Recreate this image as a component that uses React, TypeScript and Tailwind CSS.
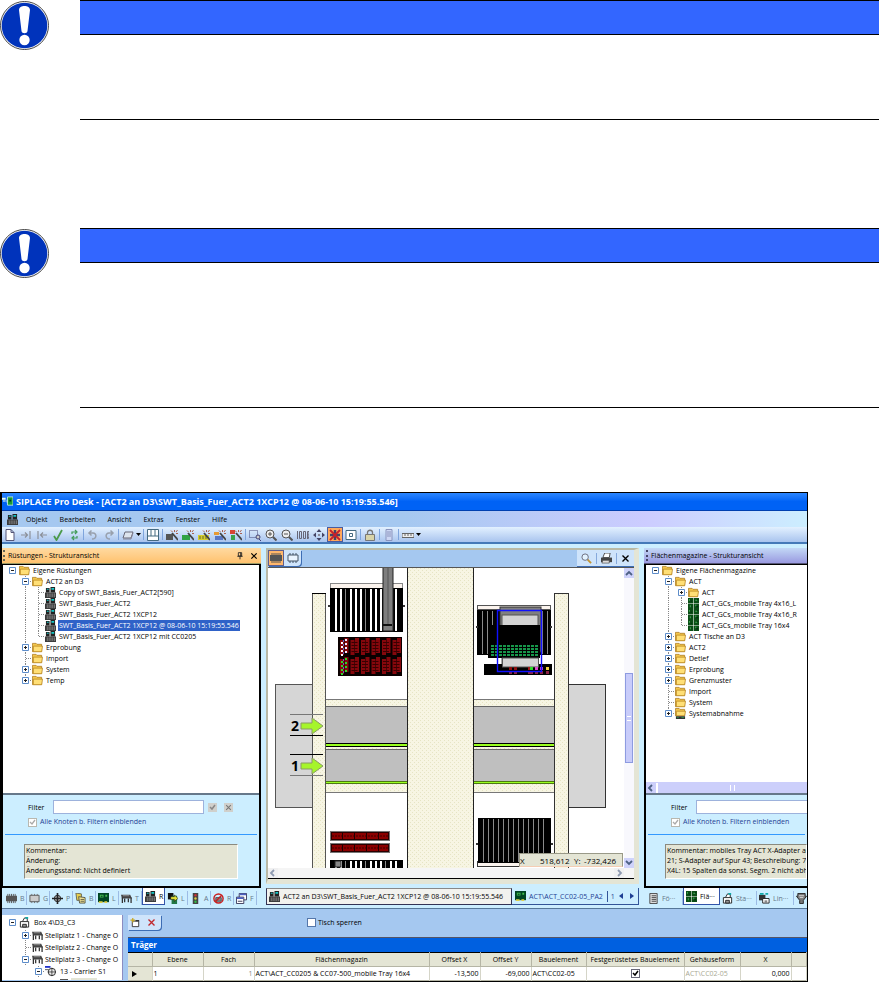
import { useState } from "react";
import type { ReactNode } from "react";
import clsx from "clsx";

type IconName =
  | "setup" | "folder" | "folderMark" | "board" | "chip" | "chipLight" | "target" | "notes" | "pcb" | "table"
  | "stack" | "traffic" | "forbidden" | "windows" | "page" | "indent" | "outdent" | "check" | "refresh" | "undo" | "redo"
  | "tray" | "grid" | "wizard" | "wizardGreen" | "wizardYellow" | "wizardMulti" | "wizardRed" | "select" | "zoomIn"
  | "zoomOut" | "hundred" | "move" | "star" | "fit" | "lock" | "db" | "ruler" | "search" | "print" | "station" | "line"
  | "feeder" | "list" | "funnel" | "newItem" | "cross" | "pin" | "app";

const wand = (
  <g>
    <path d="M6 4l6 7" stroke="#444" strokeWidth="1.8" />
    <path d="M8.500 1v2M10 4.500h2M11.500 1l-1.500 2M5 1.500L6.500 3" stroke="#a5523c" strokeWidth=".9" />
  </g>
);

const ICONS: Record<IconName, ReactNode> = {
  setup: (
    <g>
      <path d="M0 6h12v6H0z" fill="#3a3a3a" />
      <path d="M1 1h4v5H1zM6 0h5v6H6z" fill="#222" />
      <path d="M2 2h2v1H2zM7 1h3v2H7z" fill="#14c8c8" />
      <path d="M2.500 7v4M4.500 7v4M6.500 7v4M8.500 7v4M10.500 7v4" stroke="#999" strokeWidth=".8" />
    </g>
  ),
  folder: (
    <g>
      <path d="M.5 3.500v-2h4l1 1h5v8h-10z" fill="#f3c64c" stroke="#a87416" strokeWidth=".8" />
      <path d="M1.500 4.500h10l-1 6h-9z" fill="#ffdf76" stroke="#b78320" strokeWidth=".8" />
    </g>
  ),
  folderMark: (
    <g>
      <path d="M.5 2.500v-2h4l1 1h5v7h-10z" fill="#f3c64c" stroke="#a87416" strokeWidth=".8" />
      <path d="M1.500 3.500h10l-1 5h-9z" fill="#ffdf76" stroke="#b78320" strokeWidth=".8" />
      <path d="M1 9h10v3H1z" fill="#333" />
      <path d="M2 10h2v1H2zM7 10h3v1H7z" fill="#29a04a" />
    </g>
  ),
  board: (
    <g>
      <path d="M0 0h5.700v5.700H0zM6.300 0H12v5.700H6.300zM0 6.300h5.700V12H0zM6.300 6.300H12V12H6.300z" fill="#0a4d15" />
      <path d="M1 1h1v2H1zM8 2h2v1H8zM2 8h1v2H2zM8 7h1v2H8z" fill="#45b05a" />
      <path d="M3 3h1v1H3zM10 1h1v1h-1zM9 9h2v1H9z" fill="#021" />
    </g>
  ),
  chip: (
    <g>
      <path d="M2 1v10M4 1v10M6 1v10M8 1v10M10 1v10" stroke="#555" />
      <path d="M0 3h12v6H0z" fill="#555" />
    </g>
  ),
  chipLight: (
    <g>
      <path d="M3 1v10M6 1v10M9 1v10" stroke="#777" />
      <path d="M1 2.500h10v7H1z" fill="#ccc" stroke="#555" />
    </g>
  ),
  target: (
    <g fill="none" stroke="#222">
      <circle cx="6" cy="6" r="3.500" fill="#bbb" />
      <path d="M6 0v12M0 6h12" strokeWidth="1.800" />
    </g>
  ),
  notes: (
    <g>
      <path d="M1 0l6 1v7H2z" fill="#e8cf4c" stroke="#665" />
      <path d="M4 4l7 1v6H5z" fill="#f6e796" stroke="#554" />
      <path d="M6 7h4M6 9h4" stroke="#554" />
    </g>
  ),
  pcb: (
    <g>
      <path d="M0 0h12v10H0z" fill="#042" />
      <path d="M2 2h4v3H2zM8 2h2v2H8z" fill="#3fbf4b" />
      <path d="M1 9h4v2H1zM7 9h3v2H7z" fill="#e0d046" />
      <path d="M3 3h2v1H3z" fill="#012" />
    </g>
  ),
  table: (
    <g>
      <path d="M0 2h10l2 4H1z" fill="#444" />
      <path d="M1.500 5v6M4 6v4M11 5v6M8 6v4" stroke="#333" strokeWidth="1.400" />
      <path d="M2 3h7" stroke="#999" />
    </g>
  ),
  stack: (
    <g>
      <path d="M1 0h6v7H1z" fill="#111" />
      <path d="M5 3h6v9H5z" fill="#274" />
      <path d="M4 4h4V2l4 4-4 3V7H4z" fill="#e2e23a" stroke="#111" strokeWidth=".6" />
    </g>
  ),
  traffic: (
    <g>
      <path d="M3 0h6v12H3z" fill="#444" />
      <circle cx="6" cy="2.500" r="1.300" fill="#c33" />
      <circle cx="6" cy="6" r="1.300" fill="#dc4" />
      <circle cx="6" cy="9.500" r="1.300" fill="#3b4" />
    </g>
  ),
  forbidden: (
    <g fill="none" stroke="#c91f1f" strokeWidth="1.600">
      <path d="M3 5h6v4H3z" fill="#888" stroke="#333" strokeWidth=".8" />
      <circle cx="6" cy="6" r="5" />
      <path d="M9.500 2.500l-7 7" />
    </g>
  ),
  windows: (
    <g stroke="#335" fill="#fff">
      <path d="M3.500.5h8v7h-8z" />
      <path d="M.5 4.500h8v7h-8z" />
      <path d="M1 5.500h7M4 1.500h7" stroke="#4a5fc0" strokeWidth="2" />
      <path d="M2 9h5" />
    </g>
  ),
  page: <path d="M2 .5h5l3 3v8H2zM7 .5v3h3" fill="#fff" stroke="#557" />,
  indent: <path d="M1 6h6M5 3.500L7.500 6 5 8.500M10 2v8" fill="none" stroke="#8c9099" strokeWidth="1.200" />,
  outdent: <path d="M11 6H5M7 3.500L4.500 6 7 8.500M2 2v8" fill="none" stroke="#8c9099" strokeWidth="1.200" />,
  check: <path d="M2 7l2.500 4L10 1" fill="none" stroke="#4b9a4b" strokeWidth="1.800" />,
  refresh: <path d="M4 5V3h4M7 1l2 2-2 2M9 7v2H5M6 7L4 9l2 2" fill="none" stroke="#3f9a55" strokeWidth="1.200" />,
  undo: <path d="M5 10c5 0 5-6 1-6H2M4.500 1.500L2 4l2.500 2.500" fill="none" stroke="#98a0ad" strokeWidth="1.500" />,
  redo: <path d="M7 10c-5 0-5-6-1-6h4M7.500 1.500L10 4 7.500 6.500" fill="none" stroke="#98a0ad" strokeWidth="1.500" />,
  tray: (
    <g>
      <path d="M3 3h8l-2 6H1z" fill="#dde4ee" stroke="#667" />
      <path d="M1 10h8l2-6" fill="none" stroke="#889" />
    </g>
  ),
  grid: <path d="M.5.5h11v11H.5zM.5 7h11M4 .5V7M8 .5V7" fill="#fff" stroke="#446a80" />,
  wizard: <g><path d="M0 5h7v6H0z" fill="#555" />{wand}</g>,
  wizardGreen: <g><path d="M0 6h8v5H0z" fill="#31a345" />{wand}</g>,
  wizardYellow: <g><path d="M0 6h11v5H0z" fill="#d4cd2e" /><path d="M2 7v3M5 7v3M8 7v3" stroke="#663" />{wand}</g>,
  wizardMulti: <g><path d="M0 3h5v3H0z" fill="#e79a34" /><path d="M1 7h8v4H1z" fill="#5977c4" />{wand}</g>,
  wizardRed: <g><path d="M0 1h5v4H0z" fill="#d64534" /><path d="M1 6h4v5H1z" fill="#39a34b" />{wand}</g>,
  select: (
    <g fill="none" stroke="#447">
      <path d="M.5 1.500h8v7h-8z" strokeDasharray="1 1" />
      <circle cx="9" cy="8" r="2" fill="#ccc" />
      <path d="M10 10l2 2" />
    </g>
  ),
  zoomIn: (
    <g fill="none" stroke="#555">
      <circle cx="5" cy="5" r="4" fill="#eee" />
      <path d="M3 5h4M5 3v4" />
      <path d="M8 8l3.500 3.500" strokeWidth="2" />
    </g>
  ),
  zoomOut: (
    <g fill="none" stroke="#555">
      <circle cx="5" cy="5" r="4" fill="#eee" />
      <path d="M3 5h4" />
      <path d="M8 8l3.500 3.500" strokeWidth="2" />
    </g>
  ),
  hundred: <path d="M.5 2v8M2.500 2.500h2v7h-2zM6.500 2.500h2v7h-2zM10.500 10V2.500H12V6h-1.500L12 10" fill="none" stroke="#667" />,
  move: (
    <g fill="#446">
      <path d="M6 0l2.500 3h-5zM6 12l2.500-3h-5zM0 6l3-2.500v5zM12 6L9 3.500v5z" />
      <path d="M5 5h2v2H5z" fill="#889" />
    </g>
  ),
  star: (
    <g>
      <path d="M6 1v10M1 6h10" stroke="#446" strokeWidth="2.500" />
      <path d="M1 1l10 10M11 1L1 11" stroke="#c9202a" strokeWidth="1.800" />
    </g>
  ),
  fit: <path d="M1 1.500h10v9H1zM4.500 4.500h3v3h-3z" fill="#fff" stroke="#446a80" />,
  lock: (
    <g>
      <path d="M3.500 6V3.500c0-3 5-3 5 0V6" fill="none" stroke="#777" strokeWidth="1.300" />
      <path d="M1.500 5.500h9v6h-9z" fill="#d8d3a8" stroke="#777" />
    </g>
  ),
  db: <path d="M3 .5h6v11H3zM4 3h4M4 5h4M4 7h4" fill="#ccd6f4" stroke="#8a94bd" />,
  ruler: <path d="M0 4.500h12v4H0zM3 5v2M6 5v2M9 5v2" fill="#eee" stroke="#666" />,
  search: (
    <g fill="none">
      <path d="M7 7l4 4" stroke="#c29434" strokeWidth="2" />
      <circle cx="4.500" cy="4.500" r="3.500" fill="#e2f2ff" stroke="#667" />
    </g>
  ),
  print: (
    <g>
      <path d="M4 0h6L9 5H2z" fill="#fff" stroke="#444" />
      <path d="M0 5h12v5H0z" fill="#444" />
      <path d="M2 8h7v3H1z" fill="#ddd" stroke="#444" strokeWidth=".7" />
    </g>
  ),
  station: (
    <g fill="#fff" stroke="#222">
      <path d="M4 4.500L6 1h3v4" />
      <path d="M1.500 5h9v6h-9z" />
      <path d="M4 8h4v3H4z" fill="#999" />
      <path d="M7 1h3" stroke="#1aa" strokeWidth="2" />
    </g>
  ),
  line: (
    <g>
      <path d="M0 2h7v6H0z" fill="#333" />
      <path d="M1 1h4M7 1h3" stroke="#1aa" strokeWidth="2" />
      <path d="M4 6h7v5H4z" fill="#fff" stroke="#222" />
      <path d="M6 8h3v3H6z" fill="#888" />
    </g>
  ),
  feeder: (
    <g>
      <path d="M0 1h6" stroke="#2233cc" strokeWidth="2" />
      <circle cx="7.500" cy="6.500" r="4" fill="#eee" stroke="#222" />
      <path d="M3 6.500h9M7.500 2v9M0 4h4" stroke="#222" strokeWidth=".8" />
    </g>
  ),
  list: <path d="M2 .5h8v11H2zM4 3h5M4 5h5M4 7h5M4 9h5" fill="#ddd" stroke="#444" />,
  funnel: (
    <g>
      <path d="M2 .5h8v3h1.500L8 8v3.500H4V8L.5 3.500H2z" fill="#777" stroke="#222" />
      <path d="M3 3h6M4 5h4" stroke="#ddd" />
    </g>
  ),
  newItem: (
    <g>
      <path d="M2.500 4.500h7v6h-7z" fill="#fff" stroke="#333" />
      <path d="M6 4h4" stroke="#333" strokeWidth="1.500" />
      <path d="M3 1v5M.5 3.500h5" stroke="#c9a61c" strokeWidth="1.300" />
    </g>
  ),
  cross: <path d="M2 2l8 8M10 2l-8 8" fill="none" stroke="currentColor" strokeWidth="1.800" />,
  pin: <path d="M3.500 1h5v5h-5zM7 1v5M2 6.500h8M6 7v4" fill="none" stroke="#222" strokeWidth="1.300" />,
  app: (
    <g>
      <path d="M0 2h4v2H0zM5 4h1v3H5zM1 5h3v1H1z" fill="#e8fff0" />
      <path d="M6 1h6v9H6z" fill="#1a9b35" stroke="#dfe" strokeWidth=".8" />
      <path d="M8 4h2v2H8z" fill="#032" />
    </g>
  ),
};

function Icon({ name, className = "size-[11px]" }: { name: IconName; className?: string }) {
  return (
    <svg viewBox="0 0 12 12" className={clsx("shrink-0", className)} aria-hidden="true">
      {ICONS[name]}
    </svg>
  );
}

/* ---------- notes ---------- */

function Note({ className }: { className: string }) {
  return (
    <section className={clsx("flex gap-[31px] border-black", className)}>
      <svg viewBox="0 0 49 49" className="mt-px size-[49px] shrink-0" role="img" aria-label="Hinweis">
        <circle cx="24.500" cy="24.500" r="24" fill="#fff" stroke="#444" />
        <circle cx="24.500" cy="24.500" r="22.800" fill="#0033bb" />
        <path d="M19 9c0-5.500 11-5.500 11 0l-2.500 21c-.3 3-5.700 3-6 0z" fill="#fff" />
        <circle cx="24.500" cy="39" r="5.200" fill="#fff" />
      </svg>
      <div className="flex-1 border-b border-black">
        <div className="h-[35px] border-y border-black bg-[#3366ff]" />
      </div>
    </section>
  );
}

/* ---------- trees ---------- */

type TreeNode = {
  label: string;
  depth: 0 | 1 | 2;
  icon: IconName;
  toggle?: "+" | "-";
  last?: boolean;
  selected?: boolean;
};

const SETUPS: TreeNode[] = [
  { label: "Eigene Rüstungen", depth: 0, icon: "folder", toggle: "-" },
  { label: "ACT2 an D3", depth: 1, icon: "folder", toggle: "-" },
  { label: "Copy of SWT_Basis_Fuer_ACT2[590]", depth: 2, icon: "setup" },
  { label: "SWT_Basis_Fuer_ACT2", depth: 2, icon: "setup" },
  { label: "SWT_Basis_Fuer_ACT2 1XCP12", depth: 2, icon: "setup" },
  { label: "SWT_Basis_Fuer_ACT2 1XCP12 @ 08-06-10 15:19:55.546", depth: 2, icon: "setup", selected: true },
  { label: "SWT_Basis_Fuer_ACT2 1XCP12 mit CC0205", depth: 2, icon: "setup", last: true },
  { label: "Erprobung", depth: 1, icon: "folder", toggle: "+" },
  { label: "Import", depth: 1, icon: "folder" },
  { label: "System", depth: 1, icon: "folder", toggle: "+" },
  { label: "Temp", depth: 1, icon: "folder", toggle: "+", last: true },
];

const TRAYS: TreeNode[] = [
  { label: "Eigene Flächenmagazine", depth: 0, icon: "folder", toggle: "-" },
  { label: "ACT", depth: 1, icon: "folder", toggle: "-" },
  { label: "ACT", depth: 2, icon: "folder", toggle: "+" },
  { label: "ACT_GCs_mobile Tray 4x16_L", depth: 2, icon: "board" },
  { label: "ACT_GCs_mobile Tray 4x16_R", depth: 2, icon: "board" },
  { label: "ACT_GCs_mobile Tray 16x4", depth: 2, icon: "board", last: true },
  { label: "ACT Tische an D3", depth: 1, icon: "folder", toggle: "+" },
  { label: "ACT2", depth: 1, icon: "folder", toggle: "+" },
  { label: "Detlef", depth: 1, icon: "folder", toggle: "+" },
  { label: "Erprobung", depth: 1, icon: "folder", toggle: "+" },
  { label: "Grenzmuster", depth: 1, icon: "folder", toggle: "+" },
  { label: "Import", depth: 1, icon: "folder" },
  { label: "System", depth: 1, icon: "folder" },
  { label: "Systemabnahme", depth: 1, icon: "folderMark", toggle: "+", last: true },
];

function Branch({ node }: { node: TreeNode }) {
  const art = (
    <svg viewBox="0 0 10 11" className="h-[11px] w-[10px] shrink-0">
      {node.depth > 0 && (
        <path d={node.last ? "M3.500 0v6M4 5.500h6" : "M3.500 0v11M4 5.500h6"} stroke="#888" strokeDasharray="1 1" fill="none" />
      )}
      {node.toggle && (
        <g stroke="#5d8cc9" fill="#fff">
          <path d="M.5 2.500h6v6h-6z" />
          <path d={node.toggle === "+" ? "M2 5.500h3M3.500 4v3" : "M2 5.500h3"} stroke="#222" />
        </g>
      )}
    </svg>
  );
  if (!node.toggle) return art;
  return (
    <button type="button" aria-label={`${node.label} umschalten`} className="block shrink-0">
      {art}
    </button>
  );
}

function Tree({ nodes }: { nodes: TreeNode[] }) {
  return (
    <ul className="pl-[6px]">
      {nodes.map((n, i) => (
        <li key={i} className="flex h-[11px] items-center whitespace-nowrap">
          {n.depth > 0 && <span className="w-[13px] shrink-0" />}
          {n.depth > 1 && (
            <svg viewBox="0 0 13 11" className="h-[11px] w-[13px] shrink-0">
              <path d="M3.500 0v11" stroke="#888" strokeDasharray="1 1" />
            </svg>
          )}
          <Branch node={n} />
          <Icon name={n.icon} />
          <span className={clsx("ml-[2px] px-px leading-[11px]", n.selected && "bg-[#2f62c8] text-white")}>{n.label}</span>
        </li>
      ))}
    </ul>
  );
}

/* ---------- docked panels ---------- */

function FilterBox({ id, comment, wide }: { id: string; comment: string[]; wide?: boolean }) {
  const [filter, setFilter] = useState("");
  return (
    <div className="h-[93px] shrink-0 overflow-hidden border-t-2 border-[#66788a] bg-[#cceeff] pt-[5px]">
      <div className="flex items-center pl-[25px]">
        <label htmlFor={id} className="w-[25px] shrink-0">
          Filter
        </label>
        <input
          id={id}
          value={filter}
          onChange={(e) => setFilter(e.target.value)}
          className={clsx("h-[14px] shrink-0 border border-[#9db2dc] bg-white px-1", wide ? "w-[180px]" : "w-[151px]")}
        />
        <button type="button" aria-label="Filter anwenden" className="ml-1 grid size-[9px] shrink-0 place-items-center bg-[#d0d0cc] text-[#777]">
          <svg viewBox="0 0 7 7" className="size-[7px]">
            <path d="M1 3l2 2 3-4" fill="none" stroke="#888" strokeWidth="1.500" />
          </svg>
        </button>
        <button type="button" aria-label="Filter löschen" className="ml-[7px] grid size-[9px] shrink-0 place-items-center bg-[#d0d0cc] text-[#777]">
          <Icon name="cross" className="size-[7px]" />
        </button>
      </div>
      <label className="mt-[3px] flex items-center gap-[3px] whitespace-nowrap pl-[25px] leading-[10px] text-[#1f3f94]">
        <span className="grid size-[9px] place-items-center border border-[#b8b8b0] bg-white">
          <input type="checkbox" defaultChecked className="peer col-start-1 row-start-1 size-[7px] appearance-none" />
          <svg viewBox="0 0 7 7" className="pointer-events-none col-start-1 row-start-1 hidden size-[7px] peer-checked:block">
            <path d="M1 3l2 2 3-4" fill="none" stroke="#aaa" strokeWidth="1.300" />
          </svg>
        </span>
        Alle Knoten b. Filtern einblenden
      </label>
      <div className="mx-[2px] mt-[7px] h-px bg-[#3399ff]" />
      <div
        className={clsx(
          "mt-[9px] h-[35px] overflow-hidden whitespace-nowrap border border-[#8a8a80] border-b-white border-r-white bg-[#e4e5d5] px-px pt-px leading-[10px]",
          wide ? "ml-[19px]" : "mx-[21px]",
        )}
      >
        {comment.map((c) => (
          <p key={c}>{c}</p>
        ))}
      </div>
    </div>
  );
}

type StripTab = { icon: IconName; label: string; active?: boolean };

const LEFT_TABS: StripTab[] = [
  { icon: "chip", label: "B" },
  { icon: "chipLight", label: "G" },
  { icon: "target", label: "P" },
  { icon: "notes", label: "B" },
  { icon: "pcb", label: "L" },
  { icon: "table", label: "T" },
  { icon: "setup", label: "R", active: true },
  { icon: "stack", label: "L" },
  { icon: "traffic", label: "A" },
  { icon: "forbidden", label: "R" },
  { icon: "windows", label: "F" },
];

const RIGHT_TABS: StripTab[] = [
  { icon: "list", label: "Fö···" },
  { icon: "board", label: "Flä···", active: true },
  { icon: "station", label: "Sta···" },
  { icon: "line", label: "Lin···" },
  { icon: "funnel", label: "" },
];

function TabStrip({ tabs, width }: { tabs: StripTab[]; width: string }) {
  return (
    <div className="flex h-[20px] shrink-0 overflow-hidden pl-[2px]">
      {tabs.map((t, i) => (
        <button
          key={i}
          type="button"
          className={clsx(
            "flex shrink-0 items-center gap-[3px] whitespace-nowrap border-r pl-[2px]",
            width,
            t.active ? "mb-[3px] border-b border-l border-[#3355aa] bg-white text-black" : "my-[3px] border-[#9cbbe4] text-[#667788]",
          )}
        >
          <Icon name={t.icon} />
          {t.label}
        </button>
      ))}
    </div>
  );
}

/* ---------- machine drawing, in canvas units of the view ---------- */

function Comb({ x, y, w, h, light }: { x: number; y: number; w: number; h: number; light?: boolean }) {
  const slots = Array.from({ length: Math.floor((w - 4) / 5) }, (_, i) => i);
  return (
    <g>
      <rect x={x} y={y} width={w} height={h} fill="#000" />
      {slots.map((i) => {
        const white = light && i % 4 !== 2;
        return <rect key={i} x={x + 5 + i * 5} y={y + 1} width={white ? 2 : 1} height={h - 2} fill={white ? "#fff" : "#8a8a8a"} />;
      })}
    </g>
  );
}

function MachineDrawing() {
  const cols = [0, 1, 2, 3, 4, 5];
  return (
    <svg viewBox="0 0 357 300" preserveAspectRatio="xMinYMin slice" className="block h-[300px] min-w-0 flex-1 bg-white" role="img" aria-label="Maschinenansicht">
      <defs>
        <pattern id="weave" width="4" height="4" patternUnits="userSpaceOnUse">
          <rect width="4" height="4" fill="#f7f5e3" />
          <path d="M0 0h1v1H0zM2 2h1v1H2z" fill="#e6e4c4" />
        </pattern>
      </defs>

      {/* side tables */}
      <rect x="7.500" y="116.500" width="37" height="123" fill="#d6d6d6" stroke="#555" />
      <rect x="300.500" y="116.500" width="37" height="123" fill="#d6d6d6" stroke="#333" />

      {/* cross band with the two conveyors */}
      <g stroke="#777">
        <rect x="57.500" y="131.500" width="82" height="93" fill="url(#weave)" />
        <rect x="205.500" y="131.500" width="81" height="93" fill="url(#weave)" />
      </g>
      {[58, 206].map((x) => (
        <g key={x}>
          <rect x={x} y="138" width="81" height="37" fill="#bfbfbf" />
          <path d={`M${x} 138.500h81M${x} 181.500h81`} stroke="#666" />
          <rect x={x} y="182" width="81" height="31" fill="#bfbfbf" />
          <rect x={x} y="175" width="81" height="4" fill="#000" />
          <rect x={x} y="176" width="81" height="2" fill="#9aff1f" />
          <rect x={x} y="213" width="81" height="3" fill="#4c7a12" />
          <rect x={x} y="214" width="81" height="1" fill="#9aff1f" />
        </g>
      ))}

      {/* posts and middle column */}
      <rect x="139.500" y="-1" width="66" height="303" fill="url(#weave)" stroke="#222" />
      <rect x="44.500" y="25.500" width="13" height="276" fill="url(#weave)" stroke="#555" />
      <path d="M44 25.500h14" stroke="#000" />
      <rect x="286.500" y="25.500" width="14" height="276" fill="url(#weave)" stroke="#333" />

      {/* conveyor numbers */}
      <path d="M22 146.500h33M22 207.500h33" stroke="#777" />
      <path d="M22 167.500h33M22 186.500h33" stroke="#000" />
      {[158, 198].map((y) => (
        <path key={y} d={`M33 ${y - 3}h11v-5l11 8-11 8v-5H33z`} fill="#a6f52b" stroke="#8a9a66" />
      ))}
      <g className="text-[14px] font-bold" fill="#000">
        <text x="23" y="163">2</text>
        <text x="23" y="203">1</text>
      </g>

      {/* upper left magazine */}
      <rect x="62.500" y="15.500" width="72" height="5" fill="#fbf4ee" stroke="#888" />
      <Comb x={62} y={20} w={73} h={44} light />
      <path d="M60 38h2M135 38h2" stroke="#333" strokeWidth="2" />
      <rect x="115" y="-1" width="10" height="64" fill="#7e7e7e" stroke="#222" />
      <path d="M120 0v58" stroke="#555" />
      <rect x="115" y="56" width="9" height="2" fill="#111" />
      <rect x="70" y="69" width="64" height="39" fill="#0a0000" />
      {[0, 1].map((r) =>
        cols.map((c) => (
          <g key={`${r}-${c}`} fill="#86070c">
            <rect x={72 + c * 10.500} y={72 + r * 19} width="4" height="15" />
            <rect x={76.500 + c * 10.500} y={70 + r * 19} width="4" height="15" />
          </g>
        )),
      )}
      {[0, 1].map((r) =>
        [0, 1, 2, 3].map((k) => (
          <g key={`${r}-${k}`}>
            <rect x="73" y={74 + r * 19 + k * 4} width="2" height="2" fill={r ? "#2bd82b" : "#fff"} />
            <rect x="77" y={71 + r * 19 + k * 4} width="2" height="2" fill={r ? "#2bd82b" : "#f0e6ff"} />
            <rect x="75" y={72 + r * 19 + k * 4} width="1" height="2" fill="#5a6ad0" />
            {cols.slice(1).map((c) => (
              <rect key={c} x={73 + c * 10.500} y={74 + r * 19 + k * 3} width="6" height="1" fill="#3a0000" />
            ))}
          </g>
        )),
      )}

      {/* lower left magazines */}
      {[263, 275].map((y) => (
        <g key={y}>
          <rect x="62.500" y={y + 0.500} width="59" height="9" fill="#2a0000" stroke="#777" />
          <rect x="64" y={y + 2} width="56" height="6" fill="#8b0000" />
          <path d={`M64 ${y + 5}h56`} stroke="#3c0000" strokeDasharray="2 1" />
          <path d={`M74.500 ${y + 1}v8M86.500 ${y + 1}v8M98.500 ${y + 1}v8M110.500 ${y + 1}v8`} stroke="#200" />
        </g>
      ))}
      <Comb x={62} y={292} w={73} h={20} light />
      <rect x="67" y="293" width="6" height="6" fill="#888" stroke="#222" />

      {/* upper right magazine */}
      <rect x="209.500" y="37.500" width="73" height="4" fill="#fbf4ee" stroke="#555" />
      <Comb x={209} y={42} w={74} h={45} />
      <path d="M208 59h2M282 59h2" stroke="#333" strokeWidth="2" />
      <rect x="232" y="39" width="41" height="45" fill="#808080" stroke="#333" />
      <rect x="234" y="47" width="36" height="53" fill="#d3d3d3" stroke="#555" />
      <rect x="220" y="57" width="52" height="33" fill="#000" />
      {[0, 1, 2, 3].map((r) =>
        Array.from({ length: 12 }, (_, c) => (
          <rect key={`${r}-${c}`} x={223 + c * 4} y={77 + r * 3} width="3" height="2" fill="#17964a" />
        )),
      )}
      <rect x="216" y="96" width="68" height="11" fill="#000" />
      <rect x="234.500" y="90" width="36" height="9" fill="#d3d3d3" stroke="#555" />
      {[[241, "#8b1010"], [246, "#8b1010"], [260, "#a01818"], [262, "#2bd82b"], [267, "#e04ad0"], [272, "#d233d2"], [278, "#f0d040"]].map(([x, c]) => (
        <g key={x}>
          <rect x={x} y="99" width="3" height="3" fill={String(c)} />
          <rect x={x} y="103" width="3" height="3" fill="#8b2044" />
        </g>
      ))}
      <path d="M229.500 42.500h44v61h-44z" fill="none" stroke="#1010ff" strokeWidth="1.400" />

      {/* lower right magazine */}
      <rect x="209.500" y="293.500" width="73" height="5" fill="#fbf4ee" stroke="#333" />
      <Comb x={210} y={250} w={73} h={45} />
      <path d="M208 276h2M283 276h2" stroke="#333" strokeWidth="2" />
    </svg>
  );
}

function Chevron({ d }: { d: string }) {
  return (
    <svg viewBox="0 0 10 10" className="size-[10px]">
      <path d={d} fill="none" stroke="#4d6185" strokeWidth="1.800" />
    </svg>
  );
}

function MachineView() {
  return (
    <div className="flex min-w-0 flex-col border-2 border-[#b9b9a6] border-b-[5px] border-b-[#e4e5d5] border-r-[5px] border-r-[#e4e5d5]">
      <div className="flex h-[18px] shrink-0 items-start justify-between border-b border-[#555] bg-[#a5c8f0]">
        <div className="flex rounded-br bg-[#cfe4fb] shadow-[1px_1px_0_#3d6db4]">
          <button type="button" aria-label="Bauelemente" className="grid size-4 place-items-center border border-[#5f5f8f] bg-[#ffb76b]">
            <Icon name="chip" className="size-[12px]" />
          </button>
          <button type="button" aria-label="Umrisse" className="grid h-4 w-[17px] place-items-center">
            <svg viewBox="0 0 12 12" className="size-[12px]">
              <path d="M3 1v10M6 1v10M9 1v10" stroke="#456" />
              <path d="M1 3h10v6H1z" fill="#eaf4ff" stroke="#456" />
            </svg>
          </button>
        </div>
        <div className="flex h-[16px] items-center bg-[#cfe4fb] shadow-[0_1px_0_#3d6db4]">
          <button type="button" aria-label="Suchen" className="border-r border-[#86a9dc] px-1">
            <Icon name="search" />
          </button>
          <button type="button" aria-label="Drucken" className="border-r border-[#86a9dc] px-1">
            <Icon name="print" />
          </button>
          <button type="button" aria-label="Schließen" className="px-1 text-black">
            <Icon name="cross" className="size-[9px]" />
          </button>
        </div>
      </div>
      <div className="relative flex h-[300px]">
        <MachineDrawing />
        <div className="flex w-[10px] shrink-0 flex-col items-center justify-between bg-[#f8f8fd]">
          <button type="button" aria-label="Nach oben" className="bg-[#cfd3fb]">
            <Chevron d="M2 7l3-3 3 3" />
          </button>
          <div className="mt-[20px] grid h-[90px] w-[8px] place-items-center border border-[#8d9be0] bg-[#c8ccfa]">
            <span className="h-[5px] w-[4px] border-y border-white" />
          </div>
          <button type="button" aria-label="Nach unten" className="mt-[20px] bg-[#cfd3fb]">
            <Chevron d="M2 3l3 3 3-3" />
          </button>
        </div>
        {/* cursor position */}
        <div className="absolute bottom-px right-[11px] flex h-[14px] w-[104px] items-center border border-[#999988] border-b-[#f5cdb4] bg-[#e4e5d5] text-[8px]">
          <span className="w-[20px]">X</span>
          <span className="w-[34px]">518,612</span>
          <span className="w-[10px]">Y:</span>
          <span>-732,426</span>
        </div>
      </div>
      <div className="flex h-[11px] shrink-0 items-center justify-between border-b border-black bg-[#f5f5f5] pr-[10px]">
        <button type="button" aria-label="Nach links" className="bg-[#ededf0] opacity-60">
          <Chevron d="M6 2L3 5l3 3" />
        </button>
        <button type="button" aria-label="Nach rechts" className="bg-[#ededf0] opacity-60">
          <Chevron d="M4 2l3 3-3 3" />
        </button>
      </div>
    </div>
  );
}

/* ---------- bars ---------- */

const MENU = ["Objekt", "Bearbeiten", "Ansicht", "Extras", "Fenster", "Hilfe"];

const TOOLS: (IconName | "|" | "v")[] = [
  "page", "indent", "outdent", "check", "refresh", "|", "undo", "redo", "|", "tray", "v", "|", "grid", "|",
  "wizard", "wizardGreen", "wizardYellow", "wizardMulti", "wizardRed", "|", "select", "zoomIn", "zoomOut",
  "hundred", "move", "star", "fit", "|", "lock", "|", "db", "|", "ruler", "v",
];

function Toolbar() {
  return (
    <div className="flex h-[17px] shrink-0 items-center border-b-2 border-[#4479b8] bg-linear-to-b from-[#e3f1ff] to-[#a9c4ee]">
      {TOOLS.map((t, i) => {
        if (t === "|") return <span key={i} className="mx-px h-[11px] w-px bg-[#7fa5dd]" />;
        if (t === "v")
          return (
            <button key={i} type="button" aria-label="Mehr" className="shrink-0 pr-px">
              <svg viewBox="0 0 5 3" className="h-[3px] w-[5px]">
                <path d="M0 0h5L2.500 3z" />
              </svg>
            </button>
          );
        return (
          <button
            key={i}
            type="button"
            aria-label={t}
            className={clsx("grid h-[15px] w-4 shrink-0 place-items-center", t === "star" && "border border-[#4a5ca0] bg-[#ffa85a]")}
          >
            <Icon name={t} className="size-[12px]" />
          </button>
        );
      })}
    </div>
  );
}

/* ---------- bottom area ---------- */

const COLUMNS = [
  { label: "", width: "w-[24px]" },
  { label: "Ebene", width: "w-[51px]" },
  { label: "Fach", width: "w-[51px]" },
  { label: "Flächenmagazin", width: "w-[175px]" },
  { label: "Offset X", width: "w-[51px]" },
  { label: "Offset Y", width: "w-[51px]" },
  { label: "Bauelement", width: "w-[55px]" },
  { label: "Festgerüstetes Bauelement", width: "w-[98px]" },
  { label: "Gehäuseform", width: "w-[56px]" },
  { label: "X", width: "w-[51px]" },
  { label: "", width: "" },
];

function StationTree() {
  const rows: { label: string; toggle?: "+" | "-" }[] = [
    { label: "Stellplatz 1 - Change O", toggle: "+" },
    { label: "Stellplatz 2 - Change O" },
    { label: "Stellplatz 3 - Change O", toggle: "-" },
  ];
  return (
    <ul className="h-[65px] w-[121px] shrink-0 overflow-hidden whitespace-nowrap border-r border-[#8c8cc0] bg-white pl-[7px] pt-px">
      <li className="flex h-[13px] items-center">
        <Branch node={{ label: "Box 4", depth: 0, icon: "station", toggle: "-" }} />
        <Icon name="station" />
        <span className="ml-[4px]">Box 4\D3_C3</span>
      </li>
      {rows.map((r) => (
        <li key={r.label} className="flex h-[12px] items-center pl-[13px]">
          <Branch node={{ label: r.label, depth: 1, icon: "table", toggle: r.toggle }} />
          <Icon name="table" />
          <span className="ml-[2px]">{r.label}</span>
        </li>
      ))}
      <li className="flex h-[13px] items-center pl-[26px]">
        <Branch node={{ label: "Carrier", depth: 1, icon: "feeder", toggle: "-" }} />
        <Icon name="feeder" />
        <span className="ml-[4px]">13 - Carrier S1</span>
      </li>
      <li className="flex h-[11px] items-start gap-[3px] pl-[51px]">
        <span className="mt-px h-[9px] w-[8px] border border-[#555]" />
        <span className="h-[9px] w-[26px] bg-[#e4e5d5]" />
      </li>
    </ul>
  );
}

function CarrierTable() {
  return (
    <div className="min-w-0 flex-1 overflow-hidden pl-[5px]">
      <div className="flex items-center">
        <div className="flex w-[33px] gap-[6px] rounded-br bg-[#cfe4fb] py-[2px] pl-[2px] shadow-[1px_1px_0_#3d6db4]">
          <button type="button" aria-label="Neu">
            <Icon name="newItem" />
          </button>
          <button type="button" aria-label="Löschen" className="text-[#c0282d]">
            <Icon name="cross" className="size-[9px]" />
          </button>
        </div>
        <label className="ml-[146px] flex items-center gap-[2px]">
          <input type="checkbox" className="size-[9px] appearance-none border border-[#5577aa] bg-white" />
          Tisch sperren
        </label>
      </div>
      <div className="mt-[7px] h-[15px] border-t border-[#556] bg-[#0060e0] pl-[3px] text-[8px] font-bold leading-[14px] text-white">
        Träger
      </div>
      <table className="w-full table-fixed border-collapse whitespace-nowrap border-t border-black bg-white">
        <thead>
          <tr className="h-[14px] bg-[#e4e5d5]">
            {COLUMNS.map((c, i) => (
              <th key={i} scope="col" className={clsx("border-r border-[#b5b5a5] p-0 font-normal leading-[12px]", c.width)}>
                {c.label}
              </th>
            ))}
          </tr>
        </thead>
        <tbody>
          <tr className="h-[14px] border-y border-[#b5b5a5] [&>td]:border-r [&>td]:border-[#d5d5c8] [&>td]:px-px [&>td]:py-0 [&>td]:leading-[12px]">
            <td className="bg-[#e4e5d5]">
              <svg viewBox="0 0 5 6" className="ml-[3px] h-[6px] w-[5px]">
                <path d="M0 0l5 3-5 3z" />
              </svg>
            </td>
            <td>1</td>
            <td className="text-right text-[#888]">1</td>
            <td>ACT\ACT_CC0205 &amp; CC07-500_mobile Tray 16x4</td>
            <td className="text-right">-13,500</td>
            <td className="text-right">-69,000</td>
            <td>ACT\CC02-05</td>
            <td>
              <span className="mx-auto grid size-[9px] place-items-center border border-[#667]">
                <input type="checkbox" defaultChecked aria-label="Festgerüstetes Bauelement" className="peer col-start-1 row-start-1 size-[7px] appearance-none" />
                <svg viewBox="0 0 7 7" className="pointer-events-none col-start-1 row-start-1 hidden size-[7px] peer-checked:block">
                  <path d="M1 3l2 2 3-4" fill="none" stroke="#000" strokeWidth="1.500" />
                </svg>
              </span>
            </td>
            <td className="text-[#a9a994]">ACT\CC02-05</td>
            <td className="text-right">0,000</td>
            <td />
          </tr>
        </tbody>
      </table>
    </div>
  );
}

export default function App() {
  return (
    <main className="bg-white font-['Open_Sans','Noto_Sans',sans-serif] text-[7px] leading-[11px] text-black">
      <Note className="h-[120px]" />
      <Note className="mt-[108px] h-[180px]" />

      <div className="mr-[71px] mt-[84px] flex flex-col overflow-hidden border border-l-2 border-black bg-[#cceeff]">
        <header>
          <h1 className="flex h-[18px] items-center gap-[3px] whitespace-nowrap border-b border-[#0040b0] bg-linear-to-b from-[#2a86ff] via-[#0062f5] to-[#0062f5] text-[9px] font-bold text-white">
            <Icon name="app" />
            SIPLACE Pro Desk - [ACT2 an D3\SWT_Basis_Fuer_ACT2 1XCP12 @ 08-06-10 15:19:55.546]
          </h1>
          <nav className="flex h-[16px] items-center gap-2 bg-linear-to-r from-[#a5c8f0] from-50% via-[#ccccff] via-80% to-[#cceeff] pl-[5px]">
            <Icon name="setup" />
            <div className="flex gap-3">
              {MENU.map((m) => (
                <button key={m} type="button">
                  {m}
                </button>
              ))}
            </div>
          </nav>
          <Toolbar />
        </header>

        <div className="flex pt-[4px]">
          <section className="flex w-[259px] shrink-0 flex-col">
            <div className="flex h-[16px] items-center gap-[6px] border-b border-[#996] bg-linear-to-b from-[#ffd9a0] to-[#ffc26e] pl-px pr-[3px]">
              <h2 className="flex-1 border-l-2 border-dotted border-[#665] pl-[3px]">Rüstungen - Strukturansicht</h2>
              <Icon name="pin" className="size-[8px]" />
              <button type="button" aria-label="Schließen">
                <Icon name="cross" className="size-[8px]" />
              </button>
            </div>
            <div className="flex flex-1 flex-col border border-b-2 border-r-2 border-black bg-white">
              <div className="h-[228px]">
                <Tree nodes={SETUPS} />
              </div>
              <FilterBox id="filter-setup" comment={["Kommentar:", "Änderung:", "Änderungsstand: Nicht definiert"]} />
            </div>
            <TabStrip tabs={LEFT_TABS} width="w-[23px]" />
          </section>

          <section className="flex min-w-0 flex-1 flex-col px-[5px]">
            <MachineView />
            <div className="mt-[4px] flex h-[20px] items-start overflow-hidden whitespace-nowrap">
              <button type="button" className="flex h-[17px] items-center gap-[3px] border border-[#335] border-t-[#888] bg-[#f2f2ee] pl-[2px] pr-2">
                <Icon name="setup" />
                ACT2 an D3\SWT_Basis_Fuer_ACT2 1XCP12 @ 08-06-10 15:19:55.546
              </button>
              <div className="flex h-[17px] flex-1 items-center gap-[3px] border-b border-r border-[#335599] pl-[3px] text-[#1f3f94]">
                <Icon name="pcb" />
                <button type="button" className="border-r border-[#335599] pr-1">
                  ACT\ACT_CC02-05_PA2
                </button>
                <span>1</span>
                <button type="button" aria-label="Vorheriges" className="ml-auto border-y-[3px] border-r-4 border-y-transparent border-r-[#1f3f94]" />
                <button type="button" aria-label="Nächstes" className="mx-[4px] border-y-[3px] border-l-4 border-y-transparent border-l-[#1f3f94]" />
              </div>
            </div>
          </section>

          <section className="flex w-[163px] shrink-0 flex-col overflow-hidden">
            <div className="flex h-[16px] items-center border-b border-[#557] bg-linear-to-b from-[#c3d8f6] to-[#9a9ae0] px-[2px]">
              <h2 className="border-l-2 border-dotted border-[#446] pl-[3px]">Flächenmagazine - Strukturansicht</h2>
            </div>
            <div className="flex flex-1 flex-col border border-b-2 border-l-2 border-r-0 border-black bg-white">
              <div className="flex h-[228px] flex-col justify-between">
                <Tree nodes={TRAYS} />
                <div className="flex h-[11px] items-center bg-[#cccffb]">
                  <button type="button" aria-label="Nach links" className="border-r-2 border-white">
                    <Chevron d="M6 2L3 5l3 3" />
                  </button>
                  <span className="mx-auto h-[6px] w-[5px] border-x border-white" />
                </div>
              </div>
              <FilterBox
                id="filter-tray"
                wide
                comment={[
                  "Kommentar: mobiles Tray ACT X-Adapter au",
                  "21; S-Adapter auf Spur 43; Beschreibung: 7",
                  "X4L: 15 Spalten da sonst. Segm. 2 nicht abho",
                ]}
              />
            </div>
            <TabStrip tabs={RIGHT_TABS} width="w-[37px]" />
          </section>
        </div>

        <div className="flex border-t border-[#557799] bg-[#a5c8f0] pt-[6px]">
          <StationTree />
          <CarrierTable />
        </div>
      </div>
    </main>
  );
}
